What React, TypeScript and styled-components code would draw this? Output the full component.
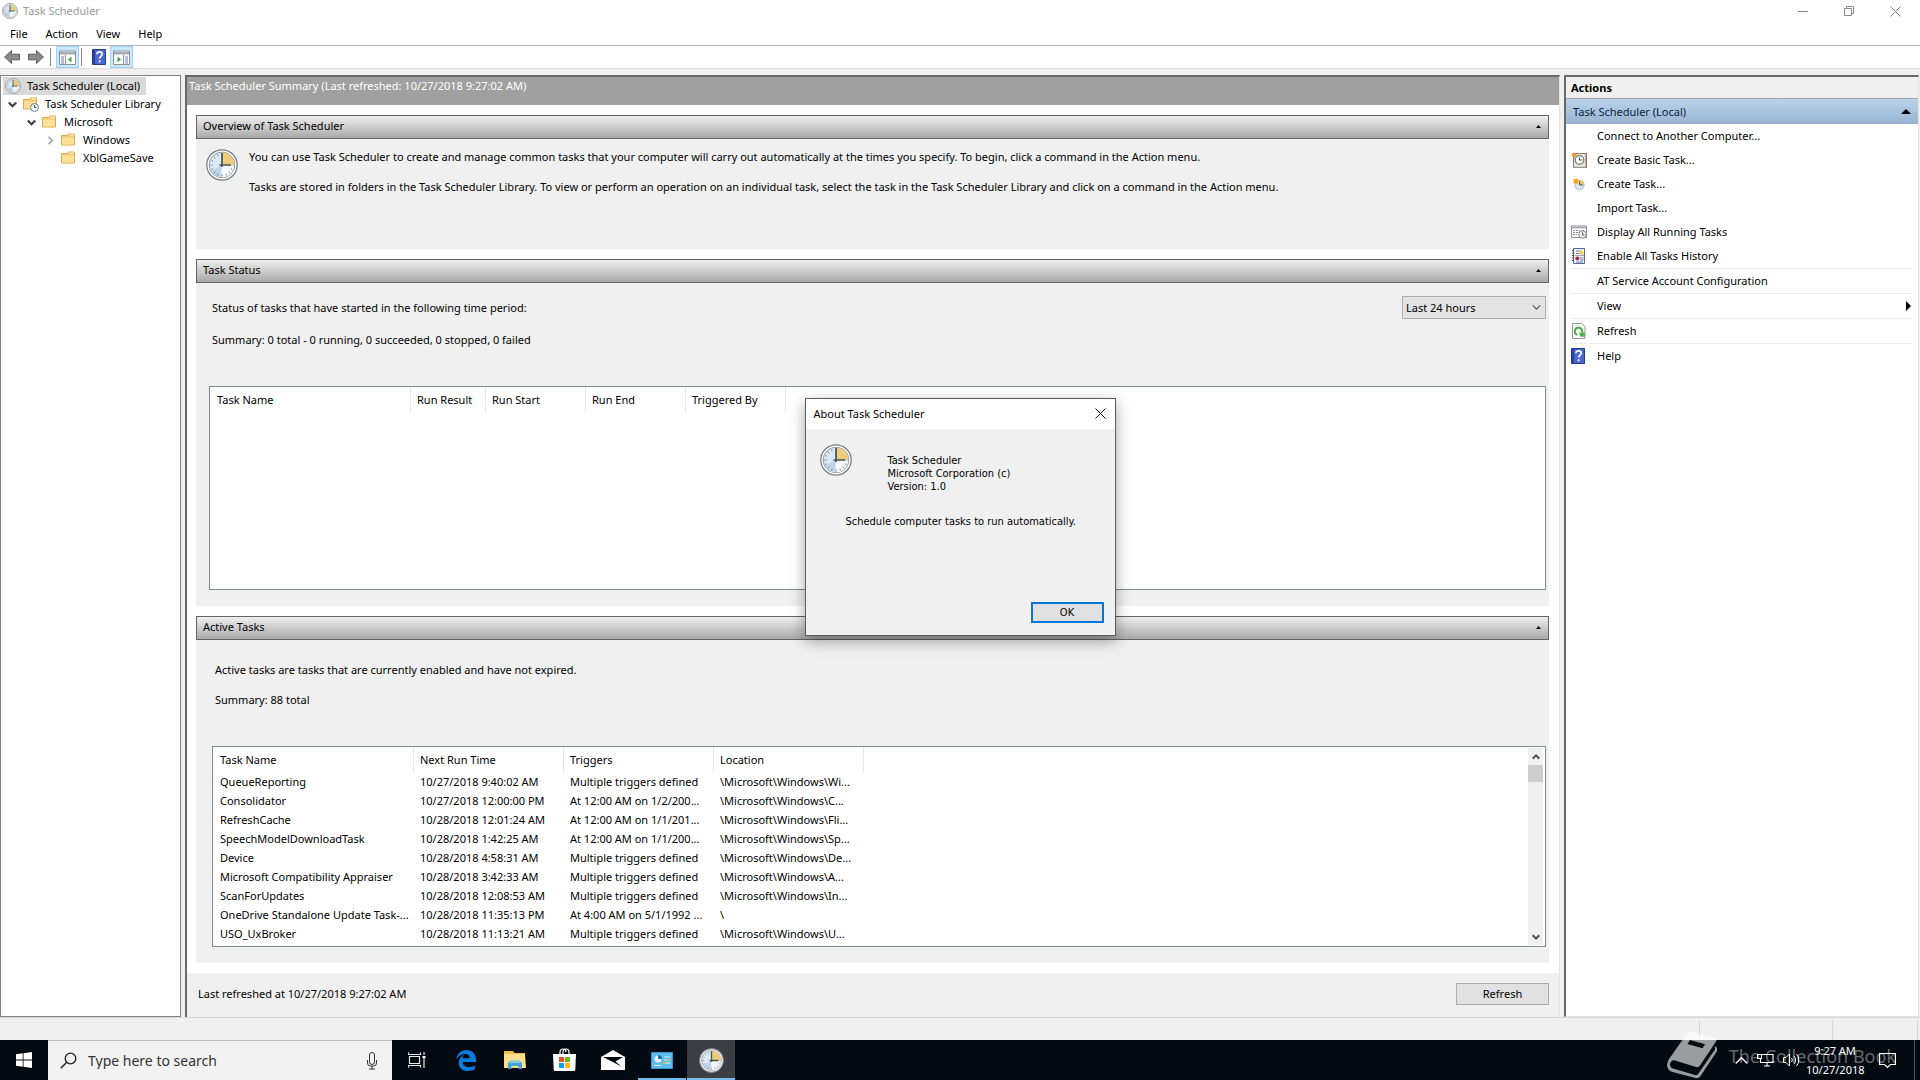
import React from 'react';
import styled, { createGlobalStyle, css } from 'styled-components';

const UI = '"Noto Sans", "Open Sans", sans-serif';
const TAHOMA = '"DejaVu Sans Condensed", "DejaVu Sans", sans-serif';

const Global = createGlobalStyle`
  *, *::before, *::after { box-sizing: border-box; }
  body { margin: 0; background: #f0f0f0; font: 11px/16px ${UI}; color: #000; }
  button, input, select { font: inherit; color: inherit; margin: 0; padding: 0; border: 0; background: none; border-radius: 0; text-align: left; }
  ul { list-style: none; margin: 0; padding: 0; }
  p, h1, h2, h3 { margin: 0; font: inherit; }
  svg { display: block; flex: none; }
`;

/* ---------- window frame ---------- */
const Desktop = styled.div`
  display: flex;
  flex-direction: column;
  height: 100vh;
  min-height: 900px;
  position: relative;
  overflow: hidden;
  white-space: nowrap;
`;
const TitleBar = styled.header`
  display: flex;
  align-items: center;
  height: 23px;
  padding: 0 2px 1px;
  background: #fff;
  color: #999;
`;
const WindowTitle = styled.h1`
  flex: 1;
  padding-left: 5px;
`;
const CaptionButton = styled.button`
  display: flex;
  align-items: center;
  justify-content: center;
  width: 46px;
  height: 20px;
`;
const MenuBar = styled.nav`
  display: flex;
  height: 23px;
  background: #fff;
  border-bottom: 1px solid #b4b4b4;
  padding-left: 1px;
`;
const MenuButton = styled.button`
  padding: 0 9px;
  line-height: 22px;
`;
const Toolbar = styled.div`
  display: flex;
  align-items: center;
  height: 23px;
  background: #fff;
  border-bottom: 1px solid #dcdcdc;
`;
const ToolButton = styled.button<{ $on?: boolean; $wide?: boolean }>`
  display: flex;
  align-items: center;
  justify-content: center;
  width: ${(p) => (p.$wide ? 24 : 23)}px;
  height: 22px;
  ${(p) => p.$on && css`background: #cce8ff; border: 1px solid #99d1ff;`}
`;
const ToolDivider = styled.span`
  width: 1px;
  height: 18px;
  margin: 0 5px 0 2px;
  background: #8c8c8c;
`;
const Workspace = styled.main`
  display: flex;
  flex: 1;
  min-height: 0;
  gap: 4px;
  padding: 6px 1px 0 0;
`;

/* ---------- tree ---------- */
const TreePane = styled.aside`
  width: 181px;
  background: #fff;
  border: 1px solid #828282;
  padding: 1px 2px;
`;
const TreeRow = styled.li<{ $depth: number }>`
  display: flex;
  align-items: center;
  height: 18px;
  padding-left: ${(p) => p.$depth * 19}px;
`;
const Twisty = styled.span`
  display: flex;
  justify-content: center;
  width: 18px;
`;
const TreeItem = styled.button<{ $selected?: boolean }>`
  display: flex;
  align-items: center;
  gap: 6px;
  height: 18px;
  padding: 0 6px 0 2px;
  background: ${(p) => (p.$selected ? '#d9d9d9' : 'transparent')};
`;

/* ---------- centre ---------- */
const CenterPane = styled.section`
  display: flex;
  flex-direction: column;
  flex: 1;
  min-width: 0;
  background: #fff;
  border: solid #696969;
  border-width: 2px 0 0 2px;
  border-right: 1px solid #e3e3e3;
`;
const SummaryHeader = styled.h2`
  height: 28px;
  padding-left: 2px;
  line-height: 17px;
  background: #a0a0a0;
  color: #fff;
`;
const Sections = styled.div`
  display: flex;
  flex-direction: column;
  flex: 1;
  min-height: 0;
  gap: 10px;
  padding: 10px 10px 10px 9px;
`;
const Section = styled.section<{ $grow?: boolean }>`
  display: flex;
  flex-direction: column;
  min-height: 0;
  background: #f0f0f0;
  flex: ${(p) => (p.$grow ? '1 1 0' : '0 0 134px')};
`;
const SectionHeader = styled.button`
  display: flex;
  align-items: center;
  justify-content: space-between;
  height: 24px;
  flex: none;
  padding: 0 7px 2px 6px;
  border: 1px solid #646464;
  background: linear-gradient(#efefef, #a8a8a8);
`;
const OverviewBody = styled.div`
  display: flex;
  gap: 11px;
  padding: 10px;
`;
const OverviewText = styled.div`
  display: grid;
  gap: 14px;
  align-content: start;
`;
const StatusBody = styled.div<{ $active?: boolean }>`
  display: flex;
  flex-direction: column;
  flex: 1;
  min-height: 0;
  padding: ${(p) => (p.$active ? '22px 3px 16px 16px' : '13px 3px 16px 13px')};
`;
const StatusTop = styled.div`
  display: flex;
  justify-content: space-between;
  align-items: center;
  height: 23px;
  padding-left: 3px;
`;
const Line = styled.p`
  padding-left: 3px;
`;
const StatusSummary = styled(Line)`
  padding-top: 13px;
  padding-bottom: 38px;
`;
const ActiveSummary = styled(Line)`
  padding-top: 14px;
  padding-bottom: 38px;
`;
const SelectBox = styled.label`
  display: grid;
  align-items: center;
  width: 144px;
  height: 23px;
  background: #e3e3e3;
  border: 1px solid #adadad;
  > * { grid-area: 1 / 1; }
  > svg { justify-self: end; margin-right: 4px; pointer-events: none; }
`;
const Select = styled.select`
  appearance: none;
  height: 21px;
  padding-left: 3px;
`;
const ListFrame = styled.div`
  display: flex;
  flex: 1;
  min-height: 0;
  justify-content: space-between;
  align-items: flex-start;
  overflow: hidden;
  background: #fff;
  border: 1px solid #828790;
`;
const Table = styled.table`
  table-layout: fixed;
  border-collapse: collapse;
  width: 0;
  th, td { padding: 0 0 0 7px; text-align: left; font-weight: 400; }
  th { height: 25px; box-shadow: 1px 0 #e5e5e5; }
  td { height: 19px; }
`;
const ScrollBar = styled.div`
  align-self: stretch;
  display: flex;
  flex-direction: column;
  width: 17px;
  padding: 1px 2px 1px 0;
`;
const ScrollButton = styled.button`
  display: flex;
  align-items: center;
  justify-content: center;
  height: 17px;
  background: #f0f0f0;
`;
const ScrollTrack = styled.div`
  flex: 1;
  background: #f0f0f0;
`;
const ScrollThumb = styled.div`
  height: 17px;
  background: #cdcdcd;
`;
const CenterFooter = styled.footer`
  display: flex;
  align-items: center;
  justify-content: space-between;
  height: 44px;
  padding: 0 10px 2px 11px;
  background: #f0f0f0;
`;
const PushButton = styled.button`
  width: 93px;
  height: 22px;
  text-align: center;
  line-height: 18px;
  background: #e1e1e1;
  border: 1px solid #adadad;
`;

/* ---------- actions ---------- */
const ActionsPane = styled.aside`
  width: 355px;
  background: #fff;
  border: solid #696969;
  border-width: 2px 0 0 2px;
  border-right: 1px solid #e3e3e3;
  border-bottom: 1px solid #e3e3e3;
`;
const ActionsTitle = styled.h2`
  height: 22px;
  padding-left: 5px;
  line-height: 21px;
  font-weight: 700;
  background: #f0f0f0;
  border-bottom: 1px solid #a0a8b0;
`;
const ActionsGroup = styled.button`
  display: flex;
  align-items: center;
  justify-content: space-between;
  width: 100%;
  height: 25px;
  padding: 0 7px 0 7px;
  background: linear-gradient(#bad3ea, #98b4d2);
  color: #0a1e3c;
`;
const ActionList = styled.ul`
  padding: 0 6px 0 5px;
`;
const ActionRow = styled.li<{ $rule?: boolean }>`
  ${(p) => p.$rule && css`border-top: 1px solid #ececec;`}
`;
const ActionButton = styled.button`
  display: flex;
  align-items: center;
  width: 100%;
  height: 24px;
`;
const ActionIcon = styled.span`
  width: 26px;
`;
const ActionLabel = styled.span`
  flex: 1;
`;

const StatusBar = styled.footer`
  display: grid;
  grid-template-columns: 1fr 133px 85px;
  height: 23px;
  padding: 2px 2px 0 0;
  background: #f0f0f0;
  border-top: 1px solid #d7d7d7;
`;
const StatusCell = styled.span`
  border-right: 1px solid #d7d7d7;
`;

/* ---------- dialog ---------- */
const DialogLayer = styled.div`
  position: absolute;
  inset: 0 0 46px 0;
  display: flex;
  align-items: center;
  justify-content: center;
  pointer-events: none;
`;
const Dialog = styled.div`
  width: 311px;
  height: 238px;
  display: flex;
  flex-direction: column;
  background: #f0f0f0;
  border: 1px solid #5c5c5c;
  box-shadow: 0 5px 14px rgba(0, 0, 0, 0.36);
  font: 11px/13px ${TAHOMA};
  pointer-events: auto;
`;
const DialogTitle = styled.div`
  display: flex;
  align-items: center;
  justify-content: space-between;
  height: 30px;
  padding: 0 9px 1px 8px;
  background: #fff;
  font: 11px/16px ${UI};
`;
const DialogBody = styled.div`
  display: flex;
  flex-direction: column;
  flex: 1;
  padding: 15px 11px 12px 14px;
`;
const DialogInfo = styled.div`
  display: flex;
  gap: 36px;
  padding-bottom: 22px;
`;
const DialogVersion = styled.div`
  padding-top: 10px;
`;
const DialogNote = styled.p`
  flex: 1;
  padding-left: 26px;
`;
const OkButton = styled.button`
  align-self: flex-end;
  width: 73px;
  height: 21px;
  text-align: center;
  background: #e1e1e1;
  border: 2px solid #0078d7;
`;

/* ---------- taskbar ---------- */
const TaskBar = styled.footer`
  display: flex;
  height: 40px;
  background: #040a12;
  color: #fff;
`;
const TaskButton = styled.button<{ $active?: boolean; $running?: boolean }>`
  display: flex;
  align-items: center;
  justify-content: center;
  width: 48px;
  height: 40px;
  ${(p) => p.$active && css`background: #3b3f44;`}
  ${(p) => (p.$active || p.$running) && css`box-shadow: inset 0 -2px #76b9ed;`}
`;
const SearchBox = styled.label`
  display: flex;
  align-items: center;
  width: 344px;
  padding: 0 13px 0 12px;
  gap: 11px;
  background: #f2f2f2;
  border-top: 1px solid #bdbdbd;
  color: #222;
`;
const SearchInput = styled.input`
  flex: 1;
  min-width: 0;
  font-size: 14px;
  outline: 0;
  &::placeholder { color: #333; opacity: 1; }
`;
const Apps = styled.div`
  display: flex;
  flex: 1;
  gap: 1px;
  padding-left: 1px;
`;
const Tray = styled.div`
  display: flex;
  align-items: center;
  gap: 9px;
  padding-right: 5px;
`;
const TrayButton = styled.button`
  display: block;
`;
const Clock = styled.div`
  width: 58px;
  margin: 0 6px 0 -3px;
  text-align: center;
  line-height: 19px;
`;
const ShowDesktop = styled.button`
  width: 1px;
  height: 40px;
  margin-left: 9px;
  background: #4d5157;
`;
const Watermark = styled.div`
  position: absolute;
  right: 24px;
  bottom: 1px;
  display: flex;
  align-items: center;
  gap: 12px;
  font-size: 18px;
  line-height: 46px;
  color: rgba(255, 255, 255, 0.4);
  pointer-events: none;
`;

/* ---------- icons ---------- */
const ClockIcon = ({ size }: { size: number }) => (
  <svg width={size} height={size} viewBox="0 0 32 32">
    <circle cx="16" cy="16" r="15.2" fill="#fdfdfd" stroke="#7b7f83" strokeWidth="1.3" />
    <circle cx="16" cy="16" r="12.8" fill="#dbe9f5" stroke="#8e979f" strokeWidth="1" />
    <path d="M16 16 5 22a12.500 12.500 0 0 0 9 6.500Z" fill="#bcd3e8" />
    <path d="M16 16l12 2a12 12 0 0 1-12 10.500Z" fill="#f5f9fc" />
    <path d="M16 16V3.500A12.500 12.500 0 0 1 28.500 16Z" fill="#eccb79" />
    <path d="M16 25.500v2M4.500 16h2M8 8l1.300 1.300M8 24l1.300-1.300M24 24l-1.300-1.300M5.600 11.500l1.500.7M11.500 5.600l.7 1.500M5.600 20.500l1.500-.7M11.500 26.400l.7-1.500M20.500 26.400l-.7-1.500M26.400 20.500l-1.500-.7" stroke="#71808e" strokeWidth="1" />
    <path d="M16 4v14M13.500 16H25" stroke="#3f5560" strokeWidth="1.700" fill="none" />
  </svg>
);
const FolderIcon = ({ clock }: { clock?: boolean }) => (
  <svg width="16" height="16" viewBox="0 0 16 16">
    <path d="M.5 3.500h6l1-1.500h6v11H.5Z" fill="#f3cd72" stroke="#d9ab4c" />
    <path d="M1 5.500h12v7H1Z" fill="#fbe09a" />
    <path d="M8.500 3H13" stroke="#fff4cf" />
    {clock && (
      <g>
        <circle cx="11.500" cy="11.500" r="4" fill="#eef4f8" stroke="#73808a" />
        <path d="M11.500 9v2.500h2" stroke="#46555f" fill="none" />
      </g>
    )}
  </svg>
);
const Chevron = ({ dir, size = 8, color = '#404040', weight = 2 }: { dir: 'down' | 'up' | 'right'; size?: number; color?: string; weight?: number }) => (
  <svg width={size} height={size} viewBox="0 0 8 8">
    <path d={{ down: 'M.7 2.200 4 5.500l3.300-3.300', up: 'M.7 5.700 4 2.400l3.300 3.300', right: 'M2.300.7 5.600 4 2.300 7.300' }[dir]} fill="none" stroke={color} strokeWidth={weight} />
  </svg>
);
const Triangle = ({ w = 7, h = 4 }: { w?: number; h?: number }) => (
  <svg width={w} height={h} viewBox="0 0 8 4" preserveAspectRatio="none"><path d="M0 4 4 0l4 4Z" fill="#000" /></svg>
);
const ArrowIcon = ({ flip }: { flip?: boolean }) => (
  <svg width="18" height="16" viewBox="0 0 18 16">
    <path transform={flip ? 'matrix(-1 0 0 1 18 0)' : undefined} d="M1.500 8 8.500 1.500v3.700h8v5.600h-8v3.700Z" fill="#8a8a8a" stroke="#5f5f5f" />
  </svg>
);
const PaneIcon = ({ flip }: { flip?: boolean }) => (
  <svg width="17" height="15" viewBox="0 0 17 15">
    <g transform={flip ? 'matrix(-1 0 0 1 17 0)' : undefined}>
      <path d="M.5 1h16v13.500H.5Z" fill="#fff" stroke="#8b9199" />
      <path d="M1 2h15v2.500H1Z" fill="#a5abb3" />
      <path d="M6.500 5v9" stroke="#8b9199" />
      <path d="M2 7h3M2 9h3M2 11h3M2 13h3" stroke="#5c7fc0" />
      <path d="M12.500 6.500v6L9 9.500Z" fill="#3fa63f" />
    </g>
  </svg>
);
const HelpIcon = () => (
  <svg width="14" height="16" viewBox="0 0 14 16">
    <path d="M.5.5h13v15H.5Z" fill="#4a68d2" stroke="#24398f" />
    <path d="M1 1h2v14H1Z" fill="#2a429f" />
    <path d="M5 5.300C5 3.600 6 2.800 7.600 2.800S10.200 3.700 10.200 5c0 2-2.500 2.200-2.500 4.500M7.700 11.300v2" fill="none" stroke="#fff" strokeWidth="1.700" />
  </svg>
);
const BasicTaskIcon = () => (
  <svg width="16" height="16" viewBox="0 0 16 16">
    <path d="M2.500 1.500h13v14h-13Z" fill="#efe9dd" stroke="#857c70" />
    <path d="M14.500 2v13H3" fill="none" stroke="#b9b1a5" />
    <circle cx="8.500" cy="8" r="4.300" fill="#f6faf6" stroke="#6f7a74" strokeWidth="1.200" />
    <path d="M8.500 5.500V8h2.500" stroke="#444" fill="none" />
    <path d="M0 1l2.500.8L4 0l.5 2.300L7 3 4.600 4 4 6 2.500 4.300 0 4.500l1.200-1.700Z" fill="#f29a28" />
  </svg>
);
const CreateTaskIcon = () => (
  <svg width="16" height="16" viewBox="0 0 16 16">
    <circle cx="8.500" cy="9" r="4.600" fill="#dce8f2" stroke="#a9b8c4" />
    <path d="M8.500 9V4.500A4.500 4.500 0 0 1 13 9Z" fill="#f0c45c" />
    <path d="M8.500 5.500V9H12" stroke="#4c5a66" fill="none" />
    <path d="M2 3l2.500.3L6 2l.8 2L9 4.500 7 6l-.5 2.500-2-1.500L2 7.500 3 5Z" fill="#f5a021" />
  </svg>
);
const RunningIcon = () => (
  <svg width="16" height="16" viewBox="0 0 16 16">
    <path d="M.5 2h15v11.500H.5Z" fill="#fff" stroke="#8b929b" />
    <path d="M1 2.500h14v2H1Z" fill="#a9b0ba" />
    <path d="M2 6.500h7M2 8.500h5M2 10.500h4M11 6.500h3" stroke="#7e8b98" strokeDasharray="2 1" />
    <circle cx="11.500" cy="10.500" r="3.800" fill="#eef3ef" stroke="#7a8580" />
    <path d="M11.500 8.500v2.500h2" stroke="#505a55" fill="none" />
  </svg>
);
const HistoryIcon = () => (
  <svg width="16" height="16" viewBox="0 0 16 16">
    <path d="M2.500.5h11v15h-11Z" fill="#f7f8fc" stroke="#5b6690" />
    <path d="M1 2.500h2M1 5h2M1 7.500h2M1 10h2M1 12.500h2" stroke="#444" />
    <path d="M5 3h4M5 5.500h3M9 10h3.500M9 12h3.500M5 14h7" stroke="#5c78b8" />
    <path d="M7.500 6.500 10.500 1.500l2.500 5Z" fill="#f3cf3a" />
    <circle cx="6.300" cy="10.500" r="2" fill="#a8284c" />
    <path d="M4 7.500h9" stroke="#9aa6c4" />
  </svg>
);
const RefreshIcon = () => (
  <svg width="16" height="16" viewBox="0 0 16 16">
    <path d="M1.500.5h9l3.500 3v12H1.500Z" fill="#fbfdfb" stroke="#8d9a92" />
    <path d="M6.300 11.800A3.700 3.700 0 1 1 11 9.500" fill="none" stroke="#4fae52" strokeWidth="2.200" />
    <path d="M8 9.500h5.800v4.300H9.500Z" fill="#4fae52" />
  </svg>
);
const Cross = ({ color }: { color: string }) => (
  <svg width="11" height="11" viewBox="0 0 11 11"><path d="M.5.5l10 10M10.500.5l-10 10" stroke={color} fill="none" /></svg>
);

/* ---------- data ---------- */
const tree = [
  { label: 'Task Scheduler Library', depth: 0, open: true, clock: true },
  { label: 'Microsoft', depth: 1, open: true },
  { label: 'Windows', depth: 2, open: false },
  { label: 'XblGameSave', depth: 2 },
];
const statusColumns: [string, number][] = [['Task Name', 200], ['Run Result', 75], ['Run Start', 100], ['Run End', 100], ['Triggered By', 100]];
const activeColumns: [string, number][] = [['Task Name', 200], ['Next Run Time', 150], ['Triggers', 150], ['Location', 150]];
const activeTasks = [
  ['QueueReporting', '10/27/2018 9:40:02 AM', 'Multiple triggers defined', '\\Microsoft\\Windows\\Wi...'],
  ['Consolidator', '10/27/2018 12:00:00 PM', 'At 12:00 AM on 1/2/200...', '\\Microsoft\\Windows\\C...'],
  ['RefreshCache', '10/28/2018 12:01:24 AM', 'At 12:00 AM on 1/1/201...', '\\Microsoft\\Windows\\Fli...'],
  ['SpeechModelDownloadTask', '10/28/2018 1:42:25 AM', 'At 12:00 AM on 1/1/200...', '\\Microsoft\\Windows\\Sp...'],
  ['Device', '10/28/2018 4:58:31 AM', 'Multiple triggers defined', '\\Microsoft\\Windows\\De...'],
  ['Microsoft Compatibility Appraiser', '10/28/2018 3:42:33 AM', 'Multiple triggers defined', '\\Microsoft\\Windows\\A...'],
  ['ScanForUpdates', '10/28/2018 12:08:53 AM', 'Multiple triggers defined', '\\Microsoft\\Windows\\In...'],
  ['OneDrive Standalone Update Task-...', '10/28/2018 11:35:13 PM', 'At 4:00 AM on 5/1/1992 ...', '\\'],
  ['USO_UxBroker', '10/28/2018 11:13:21 AM', 'Multiple triggers defined', '\\Microsoft\\Windows\\U...'],
];
const actions: { label: string; icon?: React.ReactNode; rule?: boolean; more?: boolean }[] = [
  { label: 'Connect to Another Computer...' },
  { label: 'Create Basic Task...', icon: <BasicTaskIcon /> },
  { label: 'Create Task...', icon: <CreateTaskIcon /> },
  { label: 'Import Task...' },
  { label: 'Display All Running Tasks', icon: <RunningIcon /> },
  { label: 'Enable All Tasks History', icon: <HistoryIcon /> },
  { label: 'AT Service Account Configuration', rule: true },
  { label: 'View', rule: true, more: true },
  { label: 'Refresh', icon: <RefreshIcon />, rule: true },
  { label: 'Help', icon: <HelpIcon />, rule: true },
];

const DataTable = ({ columns, rows = [] }: { columns: [string, number][]; rows?: string[][] }) => (
  <Table>
    <colgroup>{columns.map(([name, width]) => <col key={name} style={{ width }} />)}</colgroup>
    <thead><tr>{columns.map(([name]) => <th key={name} scope="col">{name}</th>)}</tr></thead>
    <tbody>{rows.map((row) => <tr key={row[0]}>{row.map((cell, i) => <td key={i}>{cell}</td>)}</tr>)}</tbody>
  </Table>
);

export default function App() {
  return (
    <Desktop>
      <Global />
      <TitleBar>
        <ClockIcon size={16} />
        <WindowTitle>Task Scheduler</WindowTitle>
        <CaptionButton aria-label="Minimize"><svg width="10" height="10"><path d="M0 5.500h10" stroke="#888" /></svg></CaptionButton>
        <CaptionButton aria-label="Restore"><svg width="10" height="10"><path d="M.5 2.500h7v7h-7ZM2.500 2.500v-2h7v7h-2" stroke="#888" fill="none" /></svg></CaptionButton>
        <CaptionButton aria-label="Close"><Cross color="#888" /></CaptionButton>
      </TitleBar>
      <MenuBar>
        {['File', 'Action', 'View', 'Help'].map((m) => <MenuButton key={m}>{m}</MenuButton>)}
      </MenuBar>
      <Toolbar>
        <ToolButton $wide aria-label="Back"><ArrowIcon /></ToolButton>
        <ToolButton $wide aria-label="Forward"><ArrowIcon flip /></ToolButton>
        <ToolDivider />
        <ToolButton $on aria-label="Show console tree"><PaneIcon /></ToolButton>
        <ToolDivider />
        <ToolButton aria-label="Help"><HelpIcon /></ToolButton>
        <ToolButton $on aria-label="Show action pane"><PaneIcon flip /></ToolButton>
      </Toolbar>

      <Workspace>
        <TreePane>
          <ul>
            <TreeRow $depth={0}>
              <TreeItem $selected><ClockIcon size={16} />Task Scheduler (Local)</TreeItem>
            </TreeRow>
            {tree.map((n) => (
              <TreeRow key={n.label} $depth={n.depth}>
                <Twisty>{n.open !== undefined && (n.open ? <Chevron dir="down" size={9} /> : <Chevron dir="right" size={9} color="#a6a6a6" weight={1.5} />)}</Twisty>
                <TreeItem><FolderIcon clock={n.clock} />{n.label}</TreeItem>
              </TreeRow>
            ))}
          </ul>
        </TreePane>

        <CenterPane>
          <SummaryHeader>Task Scheduler Summary (Last refreshed: 10/27/2018 9:27:02 AM)</SummaryHeader>
          <Sections>
            <Section>
              <SectionHeader>Overview of Task Scheduler<Triangle w={5} h={3} /></SectionHeader>
              <OverviewBody>
                <ClockIcon size={32} />
                <OverviewText>
                  <p>You can use Task Scheduler to create and manage common tasks that your computer will carry out automatically at the times you specify. To begin, click a command in the Action menu.</p>
                  <p>Tasks are stored in folders in the Task Scheduler Library. To view or perform an operation on an individual task, select the task in the Task Scheduler Library and click on a command in the Action menu.</p>
                </OverviewText>
              </OverviewBody>
            </Section>
            <Section $grow>
              <SectionHeader>Task Status<Triangle w={5} h={3} /></SectionHeader>
              <StatusBody>
                <StatusTop>
                  <span id="period-label">Status of tasks that have started in the following time period:</span>
                  <SelectBox>
                    <Select aria-labelledby="period-label" defaultValue="24h"><option value="24h">Last 24 hours</option></Select>
                    <Chevron dir="down" size={9} color="#555" weight={1} />
                  </SelectBox>
                </StatusTop>
                <StatusSummary>Summary: 0 total - 0 running, 0 succeeded, 0 stopped, 0 failed</StatusSummary>
                <ListFrame><DataTable columns={statusColumns} /></ListFrame>
              </StatusBody>
            </Section>
            <Section $grow>
              <SectionHeader>Active Tasks<Triangle w={5} h={3} /></SectionHeader>
              <StatusBody $active>
                <Line>Active tasks are tasks that are currently enabled and have not expired.</Line>
                <ActiveSummary>Summary: 88 total</ActiveSummary>
                <ListFrame>
                  <DataTable columns={activeColumns} rows={activeTasks} />
                  <ScrollBar>
                    <ScrollButton aria-label="Scroll up"><Chevron dir="up" color="#505050" /></ScrollButton>
                    <ScrollTrack><ScrollThumb /></ScrollTrack>
                    <ScrollButton aria-label="Scroll down"><Chevron dir="down" color="#505050" /></ScrollButton>
                  </ScrollBar>
                </ListFrame>
              </StatusBody>
            </Section>
          </Sections>
          <CenterFooter>
            <span>Last refreshed at 10/27/2018 9:27:02 AM</span>
            <PushButton>Refresh</PushButton>
          </CenterFooter>
        </CenterPane>

        <ActionsPane>
          <ActionsTitle>Actions</ActionsTitle>
          <ActionsGroup>Task Scheduler (Local)<Triangle w={10} h={5} /></ActionsGroup>
          <ActionList>
            {actions.map((a) => (
              <ActionRow key={a.label} $rule={a.rule}>
                <ActionButton>
                  <ActionIcon>{a.icon}</ActionIcon>
                  <ActionLabel>{a.label}</ActionLabel>
                  {a.more && <svg width="7" height="10" viewBox="0 0 7 10"><path d="M1 0l5 5-5 5Z" /></svg>}
                </ActionButton>
              </ActionRow>
            ))}
          </ActionList>
        </ActionsPane>
      </Workspace>
      <StatusBar><StatusCell /><StatusCell /><StatusCell /></StatusBar>

      <DialogLayer>
        <Dialog role="dialog" aria-labelledby="about-title">
          <DialogTitle>
            <h2 id="about-title">About Task Scheduler</h2>
            <button aria-label="Close"><Cross color="#111" /></button>
          </DialogTitle>
          <DialogBody>
            <DialogInfo>
              <ClockIcon size={32} />
              <DialogVersion>
                <p>Task Scheduler</p>
                <p>Microsoft Corporation (c)</p>
                <p>Version: 1.0</p>
              </DialogVersion>
            </DialogInfo>
            <DialogNote>Schedule computer tasks to run automatically.</DialogNote>
            <OkButton>OK</OkButton>
          </DialogBody>
        </Dialog>
      </DialogLayer>

      <TaskBar>
        <TaskButton aria-label="Start">
          <svg width="16" height="16" viewBox="0 0 16 16"><path d="M0 2.300 6.700 1.300v6.300H0ZM7.500 1.200 16 0v7.600H7.500ZM0 8.400h6.700v6.300L0 13.700ZM7.500 8.400H16V16l-8.500-1.200Z" fill="#fff" /></svg>
        </TaskButton>
        <SearchBox>
          <svg width="17" height="17" viewBox="0 0 17 17"><circle cx="10.500" cy="6.500" r="5.300" fill="none" stroke="#222" strokeWidth="1.300" /><path d="M6.700 10.300.8 16.200" stroke="#222" strokeWidth="1.400" /></svg>
          <SearchInput type="text" aria-label="Search" placeholder="Type here to search" />
          <svg width="14" height="18" viewBox="0 0 14 18"><path d="M4.500 3a2.500 2.500 0 0 1 5 0v7a2.500 2.500 0 0 1-5 0ZM2.500 8v3a3 3 0 0 0 3 3h3a3 3 0 0 0 3-3V8M7 14v3M4 17h6" fill="none" stroke="#333" /></svg>
        </SearchBox>
        <Apps>
          <TaskButton aria-label="Task view">
            <svg width="18" height="16" viewBox="0 0 18 16"><path d="M1.500 4.500h10v7h-10ZM.5.500v2h12v-2M.5 15.500v-2h12v2M16 0v3M16 7v9" fill="none" stroke="#e8e8e8" strokeWidth="1.200" /><path d="M14.500 4h3v2.500h-3Z" fill="#fff" /></svg>
          </TaskButton>
          <TaskButton aria-label="Edge">
            <svg width="20" height="21" viewBox="0 0 20 21"><path d="M.3 9.200C1.100 3.800 5 0 10.600 0 16.400 0 20 4 20 9.800V12H6.600c.2 3.600 3 5 6.200 5 2.200 0 4.300-.6 6-1.600v4.200c-2 .9-4.300 1.400-6.700 1.400-5.600 0-9.400-3-9.400-8.100 0-3.600 1.900-6.400 5-7.900-.7.900-1.100 2-1.200 3.300h7.200c0-2.400-1.300-4.200-4-4.200C6 4.100 2.500 6 .3 9.200Z" fill="#0b7bdc" /></svg>
          </TaskButton>
          <TaskButton aria-label="File Explorer">
            <svg width="22" height="18" viewBox="0 0 22 18"><path d="M0 0h9l1.500 2H21v15H0Z" fill="#f0c04a" /><path d="M0 3h21l1 14H0Z" fill="#fce08c" /><path d="M4 18v-6.500h14V18h-3.500v-3h-7v3Z" fill="#42a3dc" /><path d="M4 11.500 6 9.500h10l2 2Z" fill="#78c5ee" /></svg>
          </TaskButton>
          <TaskButton aria-label="Store">
            <svg width="23" height="24" viewBox="0 0 23 24"><path d="M7 6V4a3 3 0 0 1 6 0M10 6V4a3 3 0 0 1 6 0v2" fill="none" stroke="#fff" strokeWidth="1.200" /><path d="M0 6h23l-.7 15.500a1.500 1.500 0 0 1-1.500 1.500H2.200a1.500 1.500 0 0 1-1.500-1.500Z" fill="#fff" /><path d="M6 9h5v5H6Z" fill="#e8502b" /><path d="M12 9h5v5h-5Z" fill="#6fb822" /><path d="M6 15h5v5H6Z" fill="#0d9ce8" /><path d="M12 15h5v5h-5Z" fill="#fbb813" /></svg>
          </TaskButton>
          <TaskButton aria-label="Mail">
            <svg width="24" height="20" viewBox="0 0 24 20"><path d="M0 7 12 0l12 7v13H0Z" fill="#fff" /><path d="M2 7h20l-7.500 4.500 6 5L2 7Z" fill="#040a12" /></svg>
          </TaskButton>
          <TaskButton $running aria-label="Control Panel">
            <svg width="22" height="17" viewBox="0 0 22 17"><path d="M.5.5h21v16H.5Z" fill="#5cbcf0" stroke="#3a93d4" /><circle cx="7" cy="7" r="3.500" fill="#e9f6fd" /><path d="M7 7V3a4 4 0 0 1 4 4Z" fill="#1c6fb5" /><path d="M13 5h6M13 8h6M13 11h6M3 13.500h7" stroke="#d9f0fc" strokeWidth="1.200" /><path d="M12 11h2M16 8h2" stroke="#f3b22a" strokeWidth="2" /></svg>
          </TaskButton>
          <TaskButton $active aria-label="Task Scheduler"><ClockIcon size={25} /></TaskButton>
        </Apps>
        <Tray>
          <TrayButton aria-label="Show hidden icons"><svg width="13" height="9" viewBox="0 0 13 9"><path d="M.7 7.500l5.800-5.800 5.800 5.800" stroke="#fff" strokeWidth="1.300" fill="none" /></svg></TrayButton>
          <TrayButton aria-label="Network"><svg width="17" height="14" viewBox="0 0 17 14"><path d="M5 1.500h11v8H3.500V6M.5 1.500h4v4h-4ZM7 13h6M10 9.500V13" stroke="#fff" fill="none" strokeWidth="1.100" /></svg></TrayButton>
          <TrayButton aria-label="Volume"><svg width="17" height="14" viewBox="0 0 17 14"><path d="M.5 4.500H3l3.500-3.500v12L3 9.500H.5ZM8.500 5a3 3 0 0 1 0 4M11 3a6 6 0 0 1 0 8M13.500 1a9 9 0 0 1 0 12" stroke="#fff" fill="none" /></svg></TrayButton>
          <Clock><div>9:27 AM</div><div>10/27/2018</div></Clock>
          <TrayButton aria-label="Notifications"><svg width="17" height="17" viewBox="0 0 17 17"><path d="M.6 1.500h15.800v11h-5L8.500 15.500l-2.900-3h-5Z" stroke="#fff" fill="none" strokeWidth="1.200" /></svg></TrayButton>
          <ShowDesktop aria-label="Show desktop" />
        </Tray>
      </TaskBar>
      <Watermark>
        <svg width="50" height="47" viewBox="0 0 50 47">
          <path d="M20 1.500C21 0 22.500-.3 24 0l24 6.500c1.500.5 2 1.500 1 3L33 33.500c-1 1.500-2.500 2-4 1.500L8 28.500c-2.500-.7-5 1.300-5 4 0 2 1 3.500 3 4l22 6.500c1.500.4 2.500 0 3.500-1.500L48 17.500V14c2.500 1.500 3 3.500 1.500 6L33.500 44c-1 1.800-2.800 2.500-5 2L5.500 40C1.500 39-.5 35.500.3 31.500.7 29 2 27 3.500 25ZM23 8l-2.500 4 15 4.300 2.500-4Z" fill="rgba(255,255,255,.6)" fillRule="evenodd" />
        </svg>
        <span>The Collection Book</span>
      </Watermark>
    </Desktop>
  );
}
